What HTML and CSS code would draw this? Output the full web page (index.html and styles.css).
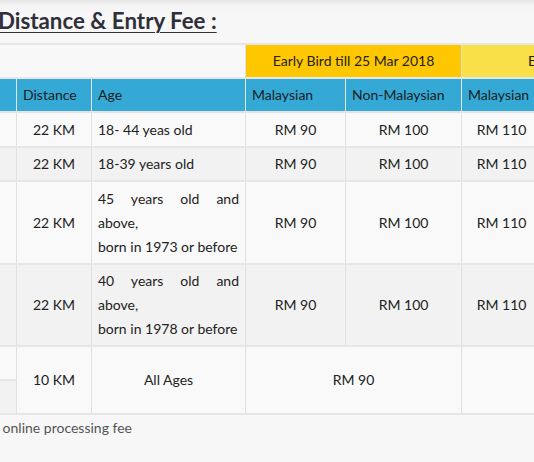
FILE: index.html
```html
<!DOCTYPE html>
<html>
<head>
<meta charset="utf-8">
<link rel="stylesheet" href="styles.css">
</head>
<body>
<div class="page">
  <h2 class="title"><span>Distance &amp; Entry Fee :</span></h2>
  <table class="fees">
    <colgroup>
      <col class="c0"><col class="c1"><col class="c2"><col class="c3"><col class="c4"><col class="c5"><col class="c6">
    </colgroup>
    <tr class="period">
      <td colspan="3" class="blank"></td>
      <td colspan="2" class="eb">Early Bird till 25 Mar 2018</td>
      <td colspan="2" class="eb2">Early Bird till 30 Apr 2018</td>
    </tr>
    <tr class="head">
      <th>Category</th>
      <th>Distance</th>
      <th>Age</th>
      <th>Malaysian</th>
      <th>Non-Malaysian</th>
      <th>Malaysian</th>
      <th>Non-Malaysian</th>
    </tr>
    <tr class="odd">
      <td></td><td class="ctr">22 KM</td><td class="age">18- 44 yeas old</td>
      <td class="ctr">RM 90</td><td class="ctr">RM 100</td><td class="ctr">RM 110</td><td class="ctr">RM 120</td>
    </tr>
    <tr class="even">
      <td></td><td class="ctr">22 KM</td><td class="age">18-39 years old</td>
      <td class="ctr">RM 90</td><td class="ctr">RM 100</td><td class="ctr">RM 110</td><td class="ctr">RM 120</td>
    </tr>
    <tr class="odd">
      <td></td><td class="ctr">22 KM</td><td class="age">45 years old and above,<br>born in 1973 or before</td>
      <td class="ctr">RM 90</td><td class="ctr">RM 100</td><td class="ctr">RM 110</td><td class="ctr">RM 120</td>
    </tr>
    <tr class="even">
      <td></td><td class="ctr">22 KM</td><td class="age">40 years old and above,<br>born in 1978 or before</td>
      <td class="ctr">RM 90</td><td class="ctr">RM 100</td><td class="ctr">RM 110</td><td class="ctr">RM 120</td>
    </tr>
    <tr class="odd short">
      <td></td><td class="ctr" rowspan="2">10 KM</td><td class="ctr" rowspan="2">All Ages</td>
      <td class="ctr" colspan="2" rowspan="2">RM 90</td><td colspan="2" rowspan="2"></td>
    </tr>
    <tr class="even short">
      <td></td>
    </tr>
  </table>
  <p class="note">*Price inclusive of online processing fee</p>
</div>
</body>
</html>
```

FILE: styles.css
```css
html, body {
  margin: 0;
  padding: 0;
  overflow: hidden;
}
body {
  background: #f7f7f7;
  font-family: "Lato", "Noto Sans", sans-serif;
  color: #222;
  width: 534px;
  height: 462px;
}
.page {
  background: linear-gradient(#e6e6e6 0, #f4f4f4 6px, #f7f7f7 14px);
  padding-top: 9px;
  margin-left: -64px;
  width: 900px;
}
.title {
  margin: 0 0 10px 62px;
  font-size: 22.3px;
  font-weight: 700;
  color: #2f2f3a;
  line-height: 24px;
}
.title span {
  text-decoration: underline;
  text-underline-offset: 3px;
  text-decoration-thickness: 1px;
}
.fees {
  border-collapse: collapse;
  table-layout: fixed;
  width: 880px;
  font-size: 14px;
}
.c0 { width: 80px; }
.c1 { width: 75px; }
.c2 { width: 154px; }
.c3 { width: 100px; }
.c4 { width: 116px; }
.c5 { width: 80px; }
.c6 { width: 275px; }
.fees td, .fees th {
  border-left: 1px solid #e0e0e0;
  border-right: 1px solid #e0e0e0;
  border-top: 2px solid #e6e6e6;
  border-bottom: 2px solid #e6e6e6;
  padding: 4.5px 6px 4px;
  line-height: 24px;
  vertical-align: middle;
}
.period td {
  height: 24px;
  padding: 4px 6px;
  text-align: center;
}
.period .blank { background: #f8f8f8; border-left: none; }
.period .eb { background: #ffc700; }
.period .eb2 { background: #f9df48; text-align: left; padding-left: 66px; }
.head th {
  background: #34a9d5;
  font-weight: 400;
  text-align: left;
  color: #1c1c1c;
  height: 24px;
  padding: 4px 6px;
  border-color: #e4e4e4;
}
.odd td { background: #f9f9f9; }
.even td { background: #f2f2f2; }
.ctr { text-align: center; }
.age { text-align: justify; }
.short td { height: 24px; padding: 4px 6px; }
.note {
  margin: 4px 0 0 -46px;
  font-size: 14px;
  color: #555;
}
```
